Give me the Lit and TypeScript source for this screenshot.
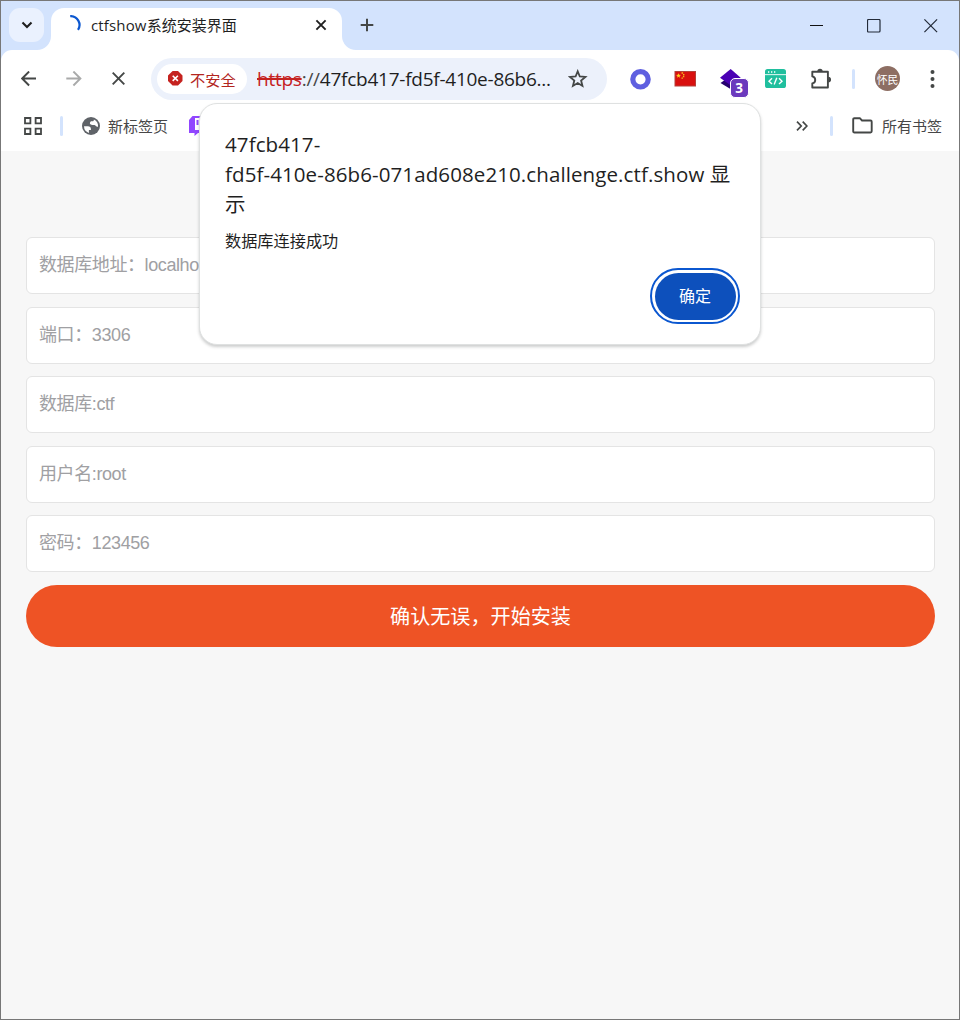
import { LitElement, html, svg, css } from "lit";
import { customElement, property } from "lit/decorators.js";

const shapes: Record<string, { w: number; h: number; body: unknown }> = {
  chevron: { w: 12, h: 8, body: svg`<path d="M1.5 1.5 6 6l4.5-4.5" fill="none" stroke="#1f1f1f" stroke-width="2.1"/>` },
  spinner: { w: 20, h: 20, body: svg`<path d="M5.2 1.1A8.9 8.9 0 0 1 13 14.900" fill="none" stroke="#0b57d0" stroke-width="2.2"/>` },
  tabClose: { w: 12, h: 12, body: svg`<path d="M1.4 1.4l9.2 9.2M10.6 1.4l-9.2 9.2" stroke="#1f1f1f" stroke-width="1.9"/>` },
  plus: { w: 14, h: 14, body: svg`<path d="M7 .7v12.6M.7 7h12.6" stroke="#444746" stroke-width="2"/>` },
  min: { w: 13, h: 13, body: svg`<path d="M0 6.5h13" stroke="#111" stroke-width="1"/>` },
  max: { w: 14, h: 14, body: svg`<rect x=".5" y=".5" width="12.500" height="12.500" rx="1" fill="none" stroke="#222a38" stroke-width="1.2"/>` },
  close: { w: 14, h: 14, body: svg`<path d="M.4.4l12.700 12.700M13.100.4.4 13.100" stroke="#222a38" stroke-width="1.2"/>` },
  back: { w: 16, h: 16, body: svg`<path d="M15 7.500H1.300M8.100.500 1.100 7.500l7 7" fill="none" stroke="#444746" stroke-width="1.9"/>` },
  forward: { w: 16, h: 16, body: svg`<path d="M.3 7.500H14M7.400.500l7 7-7 7" fill="none" stroke="#a9aaaa" stroke-width="1.9"/>` },
  stop: { w: 14, h: 14, body: svg`<path d="M.7.7l11.600 11.600M12.300.7.7 12.300" stroke="#444746" stroke-width="1.9"/>` },
  danger: { w: 15, h: 15, body: svg`<path d="M4.6 0h5.4L14.500 4.500v5.4L10 14.500H4.600L0 9.900V4.500z" fill="#c5221f"/><path d="M4.700 4.700l5.2 5.2M9.900 4.700 4.700 9.900" stroke="#fff" stroke-width="1.6"/>` },
  star: { w: 20, h: 19, body: svg`<path d="M9.700 2.3l2.1 5.2 5.6.45-4.3 3.6 1.35 5.4L9.700 14.05 4.95 16.95l1.35-5.4L2 7.95l5.6-.45z" fill="none" stroke="#444746" stroke-width="1.8"/>` },
  ring: { w: 22, h: 22, body: svg`<circle cx="11.500" cy="11.300" r="7.700" fill="#fff" stroke="#5e5fe0" stroke-width="5.2"/>` },
  flag: { w: 22, h: 16, body: svg`<rect x="1" y=".5" width="20.500" height="14.500" fill="#d9100f" stroke="#b4413a"/><path d="M4.500 2.2l.7 1.6 1.8.1-1.4 1.1.5 1.8-1.600-1L3 6.8 3.500 5 2 3.9l1.8-.1z" fill="#ffd21f"/><path d="M7.5 2h1.600M9 3.700h1.400M8.900 5.500h1.400M7.500 7.2h1.4" stroke="#f7b51e" stroke-width="1.3"/>` },
  layers: { w: 24, h: 22, body: svg`<path d="M2.500 15 12.500 8l10 7-10 6z" fill="#25006e"/><path d="M2 9.700 12.700 1l10 8.700-10.500 7.300z" fill="#4a00b4"/>` },
  code: { w: 21, h: 19, body: svg`<rect width="21" height="19" rx="2.6" fill="#20bf9e"/><path d="M0 5.6h21" stroke="#d5f5ee" stroke-width="1.1"/><path d="M3 3h1.3M6 3h1.3M9 3h1.3" stroke="#fff" stroke-width="1.3"/><path d="M7 9.3 4 12.2l3 2.9M14 9.3l3 2.9-3 2.9M11.8 8.8l-2.6 6.8" fill="none" stroke="#fff" stroke-width="1.4"/>` },
  puzzle: { w: 22, h: 22, body: svg`<path d="M3.300 3.700h15.600v15.800H3.300v-4.100c3.900-.9 3.900-6.100 0-7z" fill="none" stroke="#444746" stroke-width="1.900" stroke-linejoin="round"/><path d="M8.300 3.400a2.700 2.700 0 0 1 5.400 0zM19.200 8.700a2.900 2.900 0 0 1 0 5.800z" fill="#444746"/>` },
  dots: { w: 5, h: 20, body: svg`<circle cx="2.5" cy="3" r="2"/><circle cx="2.5" cy="10" r="2"/><circle cx="2.5" cy="17" r="2"/>` },
  apps: { w: 18, h: 18, body: svg`<path d="M1 1h5.4v5.4H1zM11.6 1H17v5.4h-5.4zM1 11.6h5.4V17H1zM11.6 11.6H17V17h-5.4z" fill="none" stroke="#444746" stroke-width="1.8"/>` },
  globe: { w: 18, h: 18, body: svg`<circle cx="9" cy="9" r="9" fill="#5f6368"/><path d="M2 9.3h3.9c1.9 0 3 1 3 2.7v1h-2v2.9A7.1 7.1 0 0 1 2 9.3z" fill="#fff"/><path d="M11.9 2.5c3 1.3 4.6 4.3 4.1 7.3-.7 0-1.300-.1-1.800-.5-.6-.5-.8-1.300-1.700-1.400-1.700-.1-3.200.3-4.100-.6-.8-.8-.6-2.200.3-2.900.7-.5 2.200.1 2.800-.5.300-.3.400-.8.400-1.400z" fill="#fff"/>` },
  purple: { w: 18, h: 20, body: svg`<path d="M3.500 0H18v14l-5 3H9l-3.500 3v-3H0V4z" fill="#9146ff"/><path d="M6 2h10v9l-3 3H6z" fill="#fff"/><path d="M8.500 4v5" stroke="#9146ff" stroke-width="2"/>` },
  more: { w: 12, h: 10, body: svg`<path d="M1 .7 5.200 5 1 9.300M6.700.7 10.900 5 6.700 9.300" fill="none" stroke="#444746" stroke-width="1.700"/>` },
  folder: { w: 21, h: 17, body: svg`<path d="M1.200 14.300V2.400q0-1.200 1.200-1.200h5.400l2.200 2.300h8.500q1.200 0 1.200 1.200v9.600q0 1.200-1.200 1.200H2.400q-1.200 0-1.200-1.200z" fill="none" stroke="#444746" stroke-width="1.900"/>` },
  flareL: { w: 14, h: 14, body: svg`<path d="M14 0v14H0A14 14 0 0 0 14 0z" fill="#fff"/>` },
  flareR: { w: 14, h: 14, body: svg`<path d="M0 0v14h14A14 14 0 0 1 0 0z" fill="#fff"/>` },
};

@customElement("ui-icon")
class UiIcon extends LitElement {
  @property() name = "";
  static styles = css`
    :host { display: block; flex: none; line-height: 0; }
    svg { display: block; fill: #444746; }
  `;
  render() {
    const s = shapes[this.name];
    return html`<svg width=${s.w} height=${s.h} viewBox="0 0 ${s.w} ${s.h}">${s.body}</svg>`;
  }
}

@customElement("browser-tabs")
class BrowserTabs extends LitElement {
  static styles = css`
    :host { display: flex; height: 49px; background: #d3e3fd; align-items: flex-end; }
    .search { display: grid; place-items: center; width: 35px; height: 34px; margin: 0 0 8px 8px; border-radius: 11px; background: #eaf1fe; }
    .flare { margin-left: -7px; }
    .tab { display: flex; align-items: center; box-sizing: border-box; width: 291px; height: 42px; padding: 0 15px 8px 14px; border-radius: 13px 13px 0 0; background: #fff; }
    .title { flex: 1; margin-left: 6px; padding-bottom: 1px; font: 15px/20px "Open Sans", "Noto Sans CJK SC", sans-serif; color: #1f1f1f; white-space: nowrap; }
    .latin { letter-spacing: 0.150px; }
    .plus { margin: 0 0 18px 4px; }
    .window { display: flex; margin-left: auto; height: 49px; }
    .cell { display: grid; place-items: center; width: 57px; }
  `;
  render() {
    return html`
      <div class="search"><ui-icon name="chevron"></ui-icon></div>
      <ui-icon class="flare" name="flareL"></ui-icon>
      <div class="tab">
        <ui-icon name="spinner"></ui-icon>
        <div class="title"><span class="latin">ctfshow</span>系统安装界面</div>
        <ui-icon name="tabClose"></ui-icon>
      </div>
      <ui-icon name="flareR"></ui-icon>
      <ui-icon class="plus" name="plus"></ui-icon>
      <div class="window">
        ${["min", "max", "close"].map((n) => html`<div class="cell"><ui-icon name=${n}></ui-icon></div>`)}
      </div>`;
  }
}

@customElement("browser-toolbar")
class BrowserToolbar extends LitElement {
  static styles = css`
    :host { display: flex; align-items: center; box-sizing: border-box; height: 57px; padding-left: 5px; background: #fff; border-radius: 11px 11px 0 0; }
    .cell { display: grid; place-items: center; flex: none; width: 45px; height: 42px; position: relative; }
    .omni { display: flex; align-items: center; box-sizing: border-box; flex: none; width: 456px; height: 42px; margin: 0 10.5px 0 10px; padding: 0 19px 0 6px; border-radius: 21px; background: #ecf1fb; }
    .chip { display: flex; align-items: center; gap: 7px; box-sizing: border-box; width: 90px; height: 30px; padding-left: 11px; border-radius: 15px; background: #fff; color: #b3261e; font: 15.200px/20px "Noto Sans CJK SC", sans-serif; white-space: nowrap; }
    .url { flex: 1; margin-left: 10px; font: 19px/28px "Open Sans", sans-serif; color: #1f1f1f; white-space: nowrap; letter-spacing: -0.250px; }
    .bad { color: #c5221f; text-decoration: line-through; text-decoration-thickness: 2px; }
    .sep { color: #474747; }
    .divider { flex: none; width: 3px; height: 20px; margin-left: 9.500px; border-radius: 2px; background: #d3e3fd; }
    .avatar { display: grid; place-items: center; flex: none; width: 25px; height: 25px; margin: 0 9.500px 0 20px; border-radius: 50%; background: #8d6e63; color: #fff; font: 10.800px/24px "Noto Sans CJK SC", sans-serif; white-space: nowrap; }
    .badge { position: absolute; left: 22px; top: 20px; width: 17px; height: 18px; border: 1px solid #fff; border-radius: 5px; background: #6b39bd; color: #fff; font: bold 13.500px/18px "Open Sans", sans-serif; text-align: center; }
  `;
  render() {
    return html`
      ${["back", "forward", "stop"].map((n) => html`<div class="cell"><ui-icon name=${n}></ui-icon></div>`)}
      <div class="omni">
        <div class="chip"><ui-icon name="danger"></ui-icon>不安全</div>
        <div class="url"><span class="bad">https</span><span class="sep">://</span>47fcb417-fd5f-410e-86b6...</div>
        <ui-icon name="star"></ui-icon>
      </div>
      ${["ring", "flag", "layers", "code", "puzzle"].map(
        (n) => html`<div class="cell"><ui-icon name=${n}></ui-icon>${n === "layers" ? html`<div class="badge">3</div>` : ""}</div>`
      )}
      <div class="divider"></div>
      <div class="avatar">怀民</div>
      <div class="cell"><ui-icon name="dots"></ui-icon></div>`;
  }
}

@customElement("bookmark-bar")
class BookmarkBar extends LitElement {
  static styles = css`
    :host { display: flex; align-items: center; box-sizing: border-box; height: 44px; padding: 0 17px 7px 23px; background: #fff; color: #474747; font: 15px/20px "Noto Sans CJK SC", sans-serif; white-space: nowrap; }
    .divider { width: 3px; height: 20px; border-radius: 2px; background: #d3e3fd; }
    .first { margin: 0 18.500px 0 18px; }
    .label { margin: 0 21px 0 8.500px; }
    .more { margin-left: auto; }
    .last { margin: 0 19px 0 22px; }
    .all { margin-left: 9px; }
  `;
  render() {
    return html`
      <ui-icon name="apps"></ui-icon>
      <div class="divider first"></div>
      <ui-icon name="globe"></ui-icon>
      <div class="label">新标签页</div>
      <ui-icon name="purple"></ui-icon>
      <ui-icon class="more" name="more"></ui-icon>
      <div class="divider last"></div>
      <ui-icon name="folder"></ui-icon>
      <div class="all">所有书签</div>`;
  }
}

@customElement("install-form")
class InstallForm extends LitElement {
  static styles = css`
    :host { display: flex; flex-direction: column; flex: 1; gap: 12.500px; box-sizing: border-box; padding: 86px 24px 0 25px; background: #f7f7f7; }
    .field { box-sizing: border-box; height: 57px; padding: 0 12px; border: 1px solid #e4e4e4; border-radius: 6px; background: #fff; color: #a0a0a3; font: 18px/54px "Liberation Sans", "Noto Sans CJK SC", sans-serif; letter-spacing: -0.400px; white-space: nowrap; }
    .submit { height: 62px; border-radius: 31px; background: #ee5325; color: #fff; font: 20.100px/61px "Noto Sans CJK SC", sans-serif; text-align: center; }
  `;
  render() {
    const fields = ["数据库地址：localhost", "端口：3306", "数据库:ctf", "用户名:root", "密码：123456"];
    return html`${fields.map((f) => html`<div class="field">${f}</div>`)}
      <div class="submit">确认无误，开始安装</div>`;
  }
}

@customElement("alert-dialog")
class AlertDialog extends LitElement {
  static styles = css`
    :host { position: absolute; left: 199px; top: 103px; display: flex; flex-direction: column; box-sizing: border-box; width: 562px; height: 242px; padding: 25px 20px 20px 25px; border: 1px solid #dfe1e1; border-radius: 18px; background: #fff; box-shadow: 0 2px 3px rgba(60, 64, 67, 0.26); color: #1f1f1f; }
    .title { font: 20.500px/30px "Open Sans", "Noto Sans CJK SC", sans-serif; white-space: nowrap; }
    .latin { letter-spacing: 0.100px; }
    .message { margin-top: 10px; font: 16.200px/22px "Noto Sans CJK SC", sans-serif; }
    .ok { align-self: flex-end; margin-top: auto; box-sizing: border-box; width: 90px; height: 56px; padding: 2.500px; border: 2px solid #0b57d0; border-radius: 28px; }
    .fill { height: 47px; border-radius: 23.500px; background: #0d50bc; color: #fff; font: 16px/45px "Noto Sans CJK SC", sans-serif; text-align: center; }
  `;
  render() {
    return html`
      <div class="title">
        <span class="latin">47fcb417-</span><br />
        <span class="latin">fd5f-410e-86b6-071ad608e210.challenge.ctf.show</span> 显<br />示
      </div>
      <div class="message">数据库连接成功</div>
      <div class="ok"><div class="fill">确定</div></div>`;
  }
}

@customElement("app-root")
class AppRoot extends LitElement {
  static styles = css`
    :host { display: block; }
    .window { position: relative; display: flex; flex-direction: column; box-sizing: border-box; width: 960px; height: 1020px; overflow: hidden; border: 1px solid #777; background: #d3e3fd; }
    .dialog { margin: -1px 0 0 -1px; }
  `;
  render() {
    return html`<div class="window">
      <browser-tabs></browser-tabs>
      <browser-toolbar></browser-toolbar>
      <bookmark-bar></bookmark-bar>
      <install-form></install-form>
      <alert-dialog class="dialog"></alert-dialog>
    </div>`;
  }
}
